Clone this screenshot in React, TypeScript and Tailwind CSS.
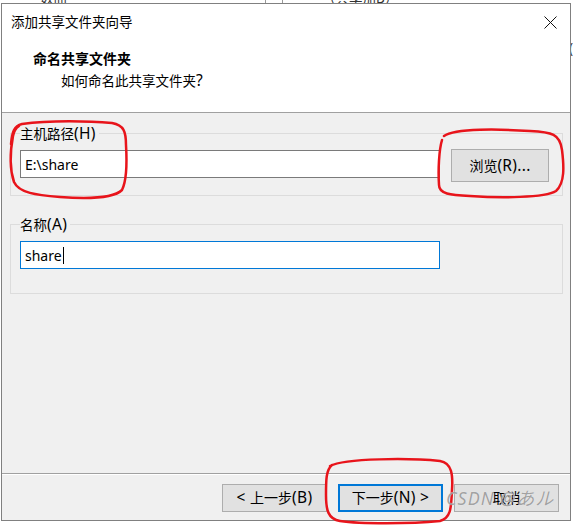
import React from 'react';

// 添加共享文件夹向导 - 命名共享文件夹
const font = "font-['Noto_Sans','Noto_Sans_CJK_SC',sans-serif]";

// 助记键部分, 如 (H)
function Key({ children }: { children: React.ReactNode }) {
  return <span className="text-[15.5px] tracking-[0.3px]">{children}</span>;
}

function WinButton({
  children,
  focused = false,
  className = '',
}: {
  children: React.ReactNode;
  focused?: boolean;
  className?: string;
}) {
  return (
    <div
      className={`flex items-center justify-center bg-[#e1e1e1] text-[14px] leading-none whitespace-pre ${
        focused ? 'border-2 border-[#0078d7]' : 'border border-[#adadad]'
      } ${className}`}
    >
      {children}
    </div>
  );
}

function GroupBox({ label, children, className = '' }: { label: React.ReactNode; children: React.ReactNode; className?: string }) {
  return (
    <fieldset className={`border border-[#dcdcdc] pl-[9px] pr-[11px] ${className}`}>
      <legend className="h-[20px] leading-[20px] pr-[3px] text-[13.5px]">{label}</legend>
      {children}
    </fieldset>
  );
}

export default function App() {
  return (
    <div className={`relative w-[573px] h-[525px] bg-white overflow-hidden text-black ${font}`}>
      {/* 背后窗口的残影 */}
      <div className="absolute top-[-12px] left-[40px] text-[13.5px] text-[#333]">数曲</div>
      <div className="absolute top-0 left-[265px] w-px h-[4px] bg-[#999]" />
      <div className="absolute top-0 left-[282px] w-px h-[4px] bg-[#999]" />
      <div className="absolute top-[-12px] left-[322px] text-[13.5px] text-[#333]">（共享加B）</div>
      <div className="absolute top-[38px] left-[569px] text-[13.5px] text-[#333]">(</div>

      {/* 对话框 */}
      <div className="absolute left-[1px] top-[3px] w-[570px] h-[518px] border border-[#808080] bg-[#f0f0f0] flex flex-col">
        {/* 标题栏 */}
        <div className="h-[37px] bg-white flex items-center justify-between pl-[9px] pr-[13px]">
          <span className="text-[13.5px]">添加共享文件夹向导</span>
          <svg width="13" height="13" viewBox="0 0 13 13">
            <path d="M0.5 0.5 L12.5 12.5 M12.5 0.5 L0.5 12.5" stroke="#111" strokeWidth="1" fill="none" />
          </svg>
        </div>

        {/* 页头 */}
        <div className="h-[72px] bg-white border-b border-[#a0a0a0] pt-[8px] pl-[31px]">
          <div className="font-bold text-[14px] leading-[20px]">命名共享文件夹</div>
          <div className="mt-[1px] pl-[28px] text-[13.5px] leading-[20px]">
            如何命名此共享文件夹<Key>?</Key>
          </div>
        </div>

        {/* 内容 */}
        <div className="flex-1 pl-[8px] pr-[7px] pt-[10px]">
          <GroupBox
            label={
              <>
                主机路径<Key>(H)</Key>
              </>
            }
            className="pb-[13px]"
          >
            <div className="mt-[7px] flex items-start">
              <div className="w-[420px] h-[28px] border border-[#7a7a7a] bg-white flex items-center pl-[4px] text-[14px]">
                E:\share
              </div>
              <WinButton className="ml-[11px] -mt-[1px] w-[98px] h-[33px]">
                浏览<Key>(R)...</Key>
              </WinButton>
            </div>
          </GroupBox>

          <GroupBox
            label={
              <>
                名称<Key>(A)</Key>
              </>
            }
            className="mt-[18px] pb-[24px]"
          >
            <div className="mt-[7px] flex">
              <div className="w-[420px] h-[28px] border border-[#0078d7] bg-white flex items-center pl-[4px] text-[14px]">
                share
                <span className="ml-[1px] w-px h-[17px] bg-black" />
              </div>
            </div>
          </GroupBox>
        </div>

        {/* 底部按钮 */}
        <div className="h-[47px] border-t border-[#a0a0a0] shadow-[inset_0_1px_0_#ffffff] pt-[10px] pr-[11px] flex justify-end items-start gap-[11px]">
          <WinButton className="w-[105px] h-[28px]">
            <Key>{'< '}</Key>上一步<Key>(B)</Key>
          </WinButton>
          <WinButton focused className="w-[105px] h-[28px]">
            下一步<Key>{'(N) >'}</Key>
          </WinButton>
          <WinButton className="w-[105px] h-[28px]">取消</WinButton>
        </div>
      </div>

      {/* 红色手绘圈注 */}
      <svg className="absolute inset-0 pointer-events-none" width="573" height="525" viewBox="0 0 573 525">
        <g stroke="#e8141b" strokeWidth="2.5" fill="none" strokeLinecap="round" strokeLinejoin="round">
          <path d="M11,144 C12,132 14,126 22,124 C50,120 90,121 112,123 C124,125 126,132 126,145 C127,162 127,180 122,190 C114,198 88,199 60,197 C36,195 19,193 14,182 C10,170 10,152 13,136 C14,131 16,128 19,126" />
          <path d="M444,136 C455,128 500,129 530,131 C552,132 560,134 562,150 C564,166 565,183 556,191 C545,198 500,198 470,196 C450,195 439,194 439,185 C438,170 439,150 442,140" />
          <path d="M330,466 C345,458 410,458 440,461 C452,463 453,475 452,490 C451,505 452,518 440,521 C410,524 360,524 340,521 C328,519 326,510 326,495 C326,480 326,470 332,465" />
        </g>
      </svg>

      {/* 水印 */}
      <div className="absolute left-[446px] top-[485px] text-[18px] tracking-[1px] italic text-[#9c9c9c] opacity-90 font-['Noto_Sans','Noto_Sans_CJK_JP',sans-serif] [text-shadow:0_0_1px_#ffffff]">
        CSDN @あル
      </div>
    </div>
  );
}
